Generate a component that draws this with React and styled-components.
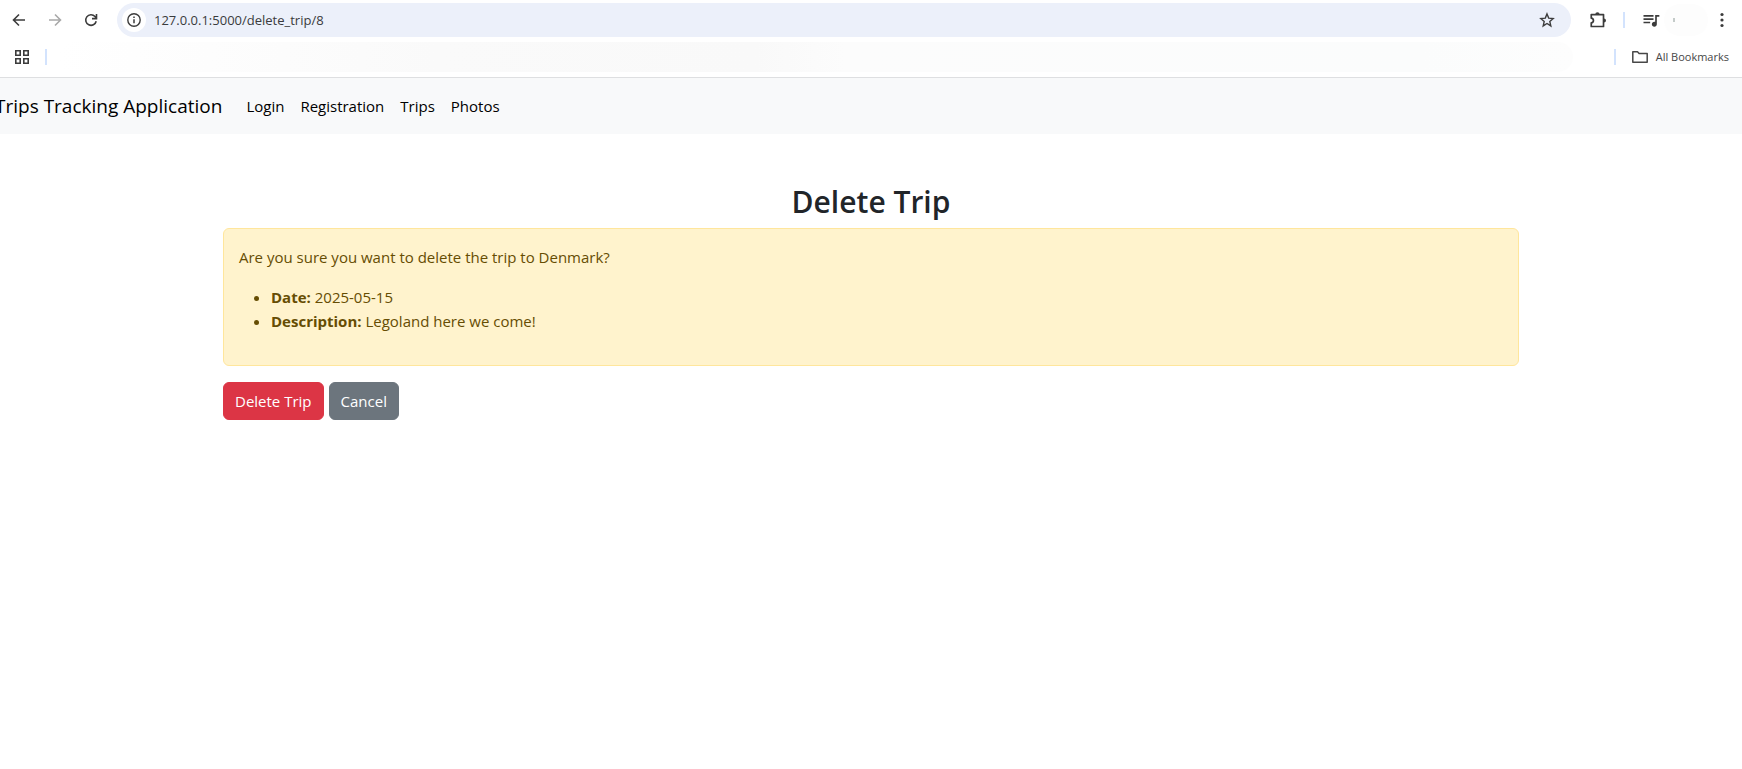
import React from "react";
import styled, { createGlobalStyle } from "styled-components";
import { MdQueueMusic } from "react-icons/md";

const GlobalStyle = createGlobalStyle`
  *, *::before, *::after { box-sizing: border-box; }
  body {
    margin: 0;
    background: #fff;
    color: #212529;
    font-family: "Segoe UI", "Open Sans", "Noto Sans", sans-serif;
    font-size: 15px;
    line-height: 24px;
    overflow-x: hidden;
  }
`;

const BrowserBar = styled.header`
  border-bottom: 1px solid #dedfe1;
  color: #474747;
`;

const Toolbar = styled.div`
  display: flex;
  align-items: center;
  height: 40px;
  padding: 0 6px 0 7px;
`;

const IconButton = styled.button`
  display: flex;
  align-items: center;
  justify-content: center;
  flex: none;
  width: ${(p) => p.$width || 24}px;
  height: 24px;
  padding: 0;
  border: 0;
  border-radius: 12px;
  background: ${(p) => (p.$filled ? "#fff" : "none")};
  color: ${(p) => (p.$dim ? "#a9a9a9" : "#3c3c3c")};
`;

const NavButtons = styled.div`
  display: flex;
  gap: 12px;
`;

const AddressBar = styled.div`
  display: flex;
  align-items: center;
  flex: 1;
  gap: 8px;
  height: 34px;
  margin: 0 15px 0 14px;
  padding: 0 12px 0 5px;
  border-radius: 17px;
  background: #ecf0fa;
`;

const AddressInput = styled.input`
  flex: 1;
  min-width: 0;
  padding: 0;
  border: 0;
  outline: 0;
  background: none;
  color: #3a3b3d;
  font: inherit;
  font-size: 13px;
`;

const Divider = styled.span`
  flex: none;
  width: 2px;
  height: 16px;
  background: #d3e3fd;
`;

const ToolbarActions = styled.div`
  display: flex;
  align-items: center;
  gap: 13px;
`;

const ToolbarEnd = styled.div`
  display: flex;
  align-items: center;
`;

const ProfileSpot = styled.span`
  display: flex;
  align-items: center;
  width: 44px;
  height: 32px;
  padding-left: 9px;
  border-radius: 16px;
  background: #fdfdfd;

  &::before {
    content: "";
    width: 2px;
    height: 4px;
    background: #c4cbc9;
  }
`;

const BookmarksBar = styled.div`
  display: flex;
  align-items: center;
  gap: 11px;
  height: 37px;
  padding: 0 13px 3px 10px;
`;

const BookmarkStrip = styled.div`
  flex: 1;
  height: 30px;
  margin-right: 30px;
  border-radius: 15px;
  background: linear-gradient(90deg, #fff, #fafafa 25%, #f9f9f9 46%, #fcfcfc 52%, #fbfcfc 90%, #fdfdfd);
`;

const AllBookmarks = styled.button`
  display: flex;
  align-items: center;
  gap: 8px;
  padding: 0 0 0 5px;
  border: 0;
  background: none;
  color: #474747;
  font: inherit;
  font-size: 11px;
`;

const Navbar = styled.nav`
  display: flex;
  align-items: center;
  gap: 16px;
  height: 56px;
  background: #f8f9fa;
`;

const Brand = styled.a`
  margin-left: -5px;
  color: #000;
  font-size: 19px;
  line-height: 30px;
  text-decoration: none;
  white-space: nowrap;
`;

const NavList = styled.ul`
  display: flex;
  margin: 0;
  padding: 0;
  list-style: none;
`;

const NavLink = styled.a`
  display: block;
  padding: 8px;
  color: #000;
  text-decoration: none;
`;

const Container = styled.main`
  max-width: 1320px;
  margin: 48px auto 0;
  padding: 0 12px;
`;

const Title = styled.h2`
  margin: 0 0 6px;
  font-size: 30px;
  font-weight: 600;
  line-height: 40px;
  text-align: center;
`;

const Alert = styled.div`
  margin-bottom: 16px;
  padding: 16px 15px;
  border: 1px solid #ffe69c;
  border-radius: 6px;
  background: #fff3cd;
  color: #664d03;
`;

const Question = styled.p`
  margin: 0 0 16px;
`;

const Details = styled.ul`
  margin: 0 0 16px;
  padding-left: 32px;
`;

const Actions = styled.form`
  display: flex;
  gap: 5px;
`;

const Button = styled.button`
  padding: 6px 11px;
  border: 1px solid ${(p) => p.$color};
  border-radius: 6px;
  background: ${(p) => p.$color};
  color: #fff;
  font: inherit;
`;

const Icon = ({ size = 16, children }) => (
  <svg width={size} height={size} viewBox="0 0 16 16" fill="none" stroke="currentColor" strokeWidth="1.6" aria-hidden="true">
    {children}
  </svg>
);

const links = ["Login", "Registration", "Trips", "Photos"];

export default function App() {
  return (
    <>
      <GlobalStyle />
      <BrowserBar>
        <Toolbar>
          <NavButtons>
            <IconButton aria-label="Back">
              <Icon><path d="M14 8H3M8 2.5 2.5 8 8 13.5" /></Icon>
            </IconButton>
            <IconButton aria-label="Forward" $dim>
              <Icon><path d="M2 8h11M8 2.5 13.5 8 8 13.5" /></Icon>
            </IconButton>
            <IconButton aria-label="Reload">
              <Icon><path d="M13.2 9.2A5.3 5.3 0 1 1 12 4.5l1.4 1.6M13.5 2v4.6H9" /></Icon>
            </IconButton>
          </NavButtons>
          <AddressBar>
            <IconButton aria-label="Site information" $filled>
              <Icon>
                <circle cx="8" cy="8" r="6.2" strokeWidth="1.4" />
                <path d="M8 7.2v4M8 4.5v1.6" strokeWidth="1.5" />
              </Icon>
            </IconButton>
            <AddressInput aria-label="Address" defaultValue="127.0.0.1:5000/delete_trip/8" />
            <IconButton aria-label="Bookmark this page">
              <Icon>
                <path d="m8 1.9 1.7 4.2 4.5.4-3.4 3 1 4.4L8 11.5l-3.8 2.4 1-4.4-3.4-3 4.5-.4z" strokeWidth="1.4" />
              </Icon>
            </IconButton>
          </AddressBar>
          <ToolbarActions>
            <IconButton aria-label="Extensions">
              <Icon size={18}>
                <path d="M2 3.2h10.9v10.6H2v-3.2c2.6-.2 2.6-4 0-4.2z" strokeWidth="1.5" strokeLinejoin="round" />
                <path d="M5.6 2.900a1.900 1.900 0 0 1 3.800 0zM13.300 6.700a1.800 1.800 0 0 1 0 3.600z" fill="currentColor" stroke="none" />
              </Icon>
            </IconButton>
            <Divider />
            <ToolbarEnd>
              <IconButton aria-label="Media controls" $width={26}>
                <MdQueueMusic size={20} />
              </IconButton>
              <ProfileSpot />
              <IconButton aria-label="Menu" $width={28}>
                <Icon>
                  <g fill="currentColor" stroke="none">
                    <circle cx="8" cy="2.5" r="1.6" />
                    <circle cx="8" cy="8" r="1.6" />
                    <circle cx="8" cy="13.5" r="1.6" />
                  </g>
                </Icon>
              </IconButton>
            </ToolbarEnd>
          </ToolbarActions>
        </Toolbar>
        <BookmarksBar>
          <IconButton aria-label="Apps">
            <Icon><path d="M1.800 1.800h4.400v4.400h-4.400zM9.800 1.800h4.400v4.400h-4.400zM1.800 9.800h4.400v4.400h-4.400zM9.800 9.800h4.400v4.400h-4.400z" /></Icon>
          </IconButton>
          <Divider />
          <BookmarkStrip />
          <Divider />
          <AllBookmarks>
            <Icon><path d="M.8 13.200V2.800h4.700l1.600 1.700h8.100v8.700z" strokeWidth="1.500" strokeLinejoin="round" /></Icon>
            All Bookmarks
          </AllBookmarks>
        </BookmarksBar>
      </BrowserBar>
      <Navbar>
        <Brand href="#">Trips Tracking Application</Brand>
        <NavList>
          {links.map((label) => (
            <li key={label}><NavLink href="#">{label}</NavLink></li>
          ))}
        </NavList>
      </Navbar>
      <Container>
        <Title>Delete Trip</Title>
        <Alert role="alert">
          <Question>Are you sure you want to delete the trip to Denmark?</Question>
          <Details>
            <li><strong>Date:</strong> 2025-05-15</li>
            <li><strong>Description:</strong> Legoland here we come!</li>
          </Details>
        </Alert>
        <Actions onSubmit={(e) => e.preventDefault()}>
          <Button type="submit" $color="#dc3545">Delete Trip</Button>
          <Button type="button" $color="#6c757d">Cancel</Button>
        </Actions>
      </Container>
    </>
  );
}
